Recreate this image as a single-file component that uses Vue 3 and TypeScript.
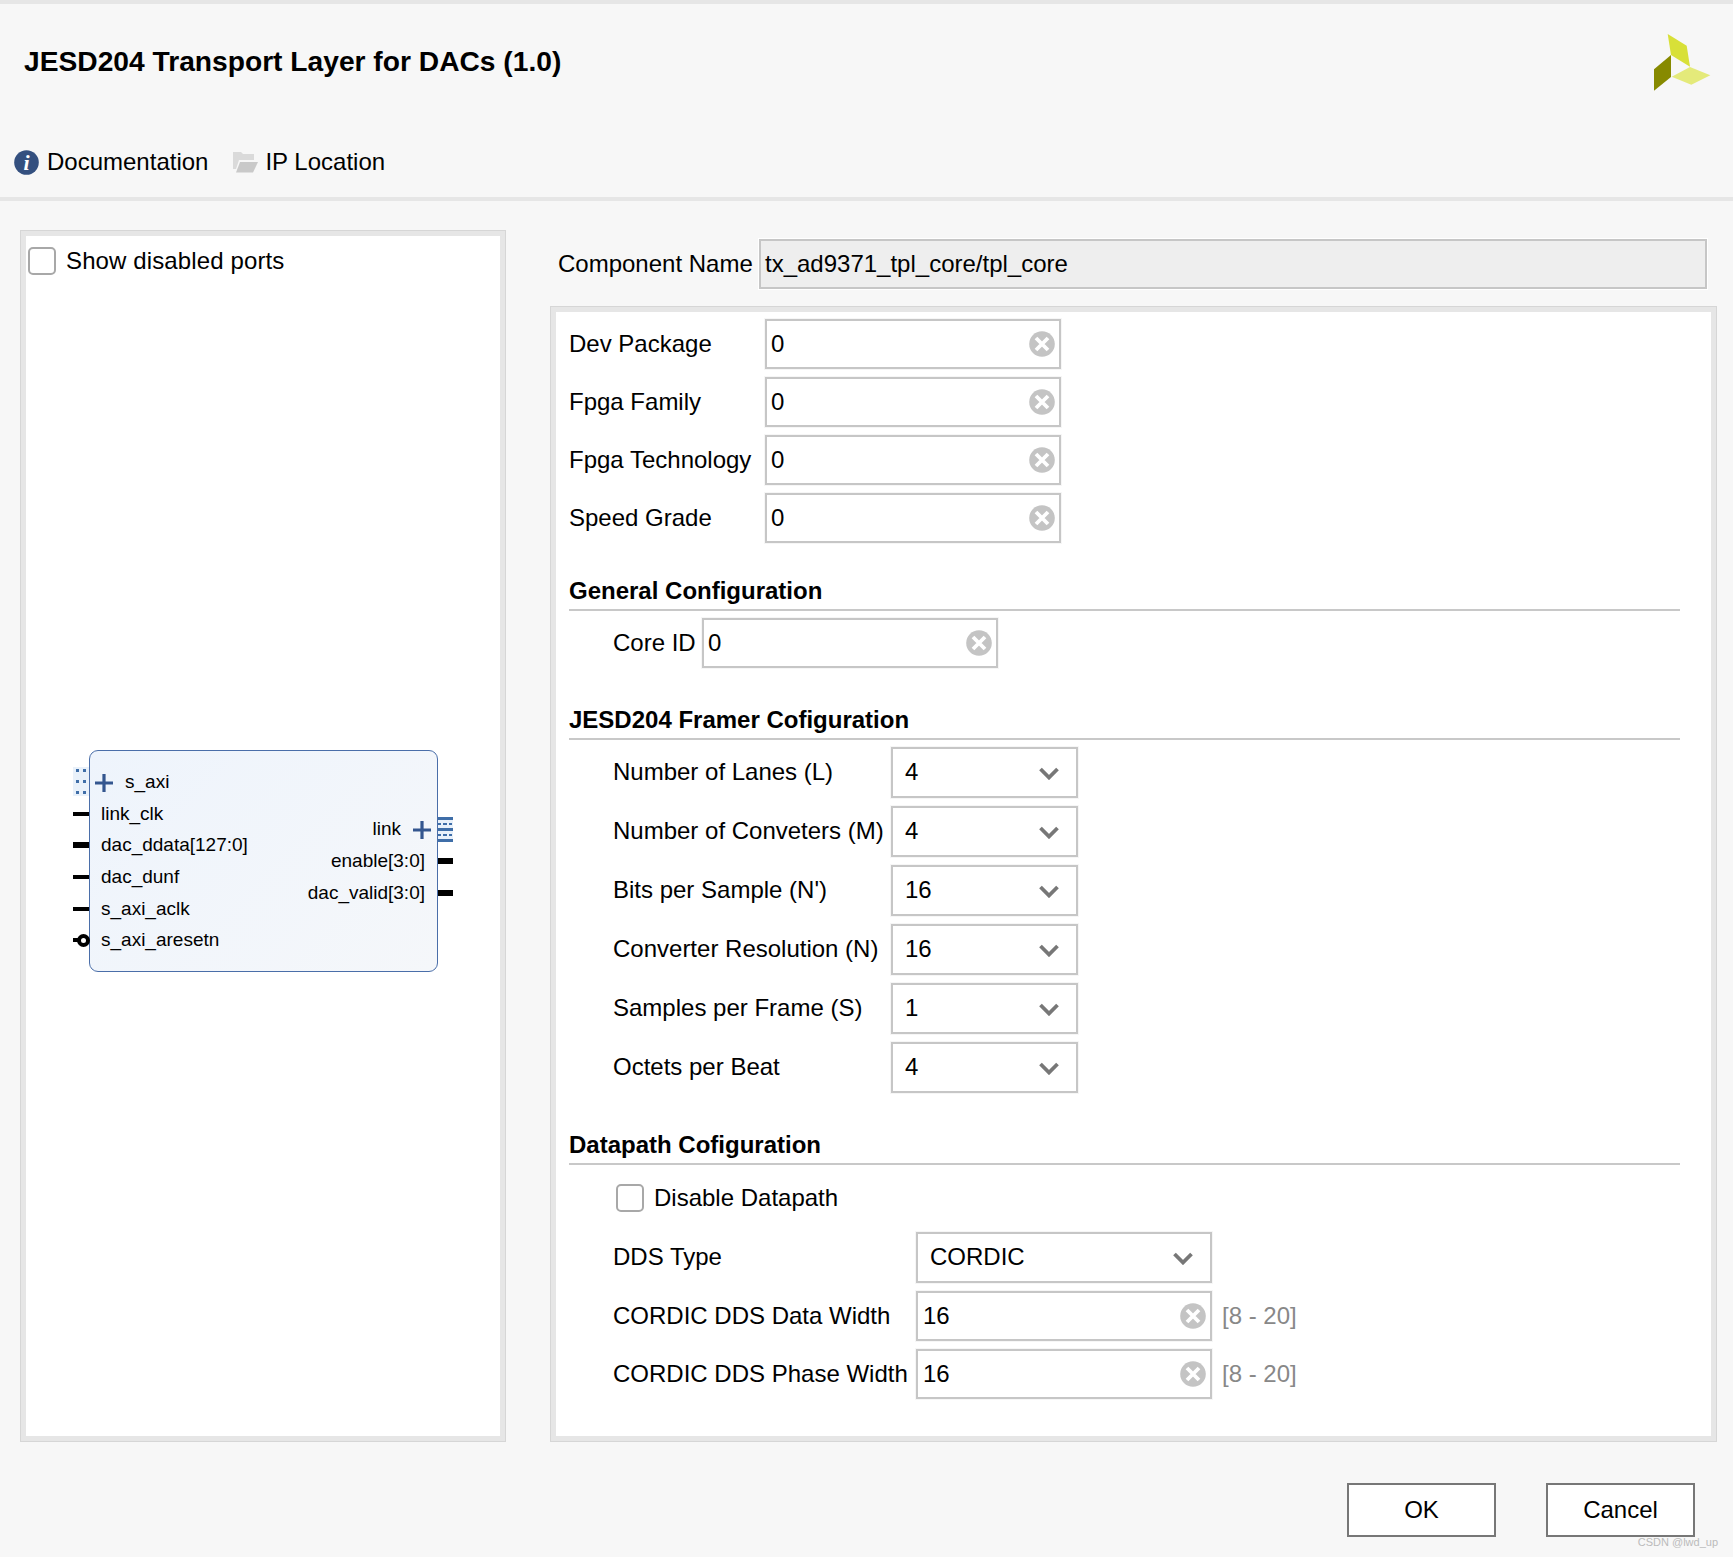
<script setup lang="ts">
interface Field { label: string; value: string; kind: 'input' | 'select'; range?: string }

const deviceFields: Field[] = [
  { label: 'Dev Package', value: '0', kind: 'input' },
  { label: 'Fpga Family', value: '0', kind: 'input' },
  { label: 'Fpga Technology', value: '0', kind: 'input' },
  { label: 'Speed Grade', value: '0', kind: 'input' },
]
const framerFields: Field[] = [
  { label: 'Number of Lanes (L)', value: '4', kind: 'select' },
  { label: 'Number of Conveters (M)', value: '4', kind: 'select' },
  { label: "Bits per Sample (N')", value: '16', kind: 'select' },
  { label: 'Converter Resolution (N)', value: '16', kind: 'select' },
  { label: 'Samples per Frame (S)', value: '1', kind: 'select' },
  { label: 'Octets per Beat', value: '4', kind: 'select' },
]
const dataFields: Field[] = [
  { label: 'DDS Type', value: 'CORDIC', kind: 'select' },
  { label: 'CORDIC DDS Data Width', value: '16', kind: 'input', range: '[8 - 20]' },
  { label: 'CORDIC DDS Phase Width', value: '16', kind: 'input', range: '[8 - 20]' },
]
const sections = [
  { title: '', rowClass: 'device', indent: false, fields: deviceFields },
  { title: 'General Configuration', rowClass: 'general', indent: true, fields: [{ label: 'Core ID', value: '0', kind: 'input' } as Field] },
  { title: 'JESD204 Framer Cofiguration', rowClass: 'framer', indent: true, fields: framerFields },
  { title: 'Datapath Cofiguration', rowClass: 'datapath', indent: true, fields: dataFields },
]
const leftPorts = [
  { name: 'link_clk', bus: false, neg: false },
  { name: 'dac_ddata[127:0]', bus: true, neg: false },
  { name: 'dac_dunf', bus: false, neg: false },
  { name: 's_axi_aclk', bus: false, neg: false },
  { name: 's_axi_aresetn', bus: false, neg: true },
]
const rightPorts = ['enable[3:0]', 'dac_valid[3:0]']
const dotRows = [2, 13, 24]
</script>

<template>
  <div class="dialog">
    <header class="head">
      <div class="title-row">
        <h1 class="title">JESD204 Transport Layer for DACs (1.0)</h1>
        <svg class="logo" width="60" height="60" viewBox="0 0 60 60">
          <polygon points="17.7,0 36.7,11.7 40,32.7 21,21" fill="#d8e038" />
          <polygon points="21,21 21,43 4,56.7 4,35.3" fill="#878a00" />
          <polygon points="21.7,42.7 40,33 60.3,41.3 41.3,50.7" fill="#e4ea7a" />
        </svg>
      </div>
      <nav class="links">
        <span class="link">
          <svg width="25" height="25" viewBox="0 0 25 25">
            <circle cx="12.5" cy="12.5" r="12.3" fill="#34507f" />
            <text x="12.5" y="20" class="info-i" text-anchor="middle">i</text>
          </svg>
          Documentation
        </span>
        <span class="link folder">
          <svg width="25" height="23" viewBox="0 0 25 23">
            <path d="M0 1 H8 L10 3 H21 V9 H6 L3 18 H0 Z" fill="#dadada" />
            <path d="M7 11 H25 L20 21.5 H3 Z" fill="#c9c9c9" />
          </svg>
          IP Location
        </span>
      </nav>
    </header>

    <main class="body">
      <section class="pane symbol-pane">
        <label class="check show-ports">
          <span class="box"></span>
          Show disabled ports
        </label>
        <div class="canvas">
          <div class="block">
            <div class="ports-left">
              <div class="port axi">
                <svg class="bus-left" width="16" height="29" viewBox="0 0 16 29">
                  <rect width="16" height="29" fill="#e9f1fa" />
                  <template v-for="y in dotRows" :key="y">
                    <rect x="3" :y="y" width="3" height="3" fill="#3f6ea8" />
                    <rect x="10" :y="y" width="3" height="3" fill="#3f6ea8" />
                  </template>
                </svg>
                <svg class="plus" width="18" height="18" viewBox="0 0 18 18"><path d="M9 0 V18 M0 9 H18" stroke="#34568f" stroke-width="3.2" /></svg>
                s_axi
              </div>
              <div v-for="p in leftPorts" :key="p.name" class="port">
                <span class="stub" :class="{ bus: p.bus }"></span>
                <span v-if="p.neg" class="bubble"></span>
                {{ p.name }}
              </div>
            </div>
            <div class="ports-right">
              <div class="port right link-port">
                link
                <svg class="plus" width="18" height="18" viewBox="0 0 18 18"><path d="M9 0 V18 M0 9 H18" stroke="#34568f" stroke-width="3.2" /></svg>
                <svg class="bus-right" width="15" height="25" viewBox="0 0 15 25">
                  <rect width="15" height="25" fill="#e9f1fa" />
                  <path d="M0 1.5 H15 M0 12.5 H15 M0 23.5 H15" stroke="#3f6ea8" stroke-width="3" />
                  <path d="M0 7 H15 M0 18 H15" stroke="#3f6ea8" stroke-width="2" stroke-dasharray="3 2 4 2" />
                </svg>
              </div>
              <div v-for="p in rightPorts" :key="p" class="port right">
                {{ p }}
                <span class="stub-right"></span>
              </div>
            </div>
          </div>
        </div>
      </section>

      <div class="config">
        <div class="name-row">
          <span class="name-label">Component Name</span>
          <div class="name-input">tx_ad9371_tpl_core/tpl_core</div>
        </div>
        <section class="pane form-pane">
          <div v-for="s in sections" :key="s.rowClass" class="group" :class="s.rowClass">
            <h2 v-if="s.title" class="group-title">{{ s.title }}</h2>
            <label v-if="s.rowClass === 'datapath'" class="check disable">
              <span class="box"></span>
              Disable Datapath
            </label>
            <div class="rows" :class="{ indent: s.indent }">
              <div v-for="f in s.fields" :key="f.label" class="row" :class="'row-' + f.kind">
                <span class="row-label">{{ f.label }}</span>
                <div class="control" :class="f.kind">
                  <span class="value">{{ f.value }}</span>
                  <svg v-if="f.kind === 'input'" width="26" height="26" viewBox="0 0 26 26">
                    <circle cx="13" cy="13" r="12.8" fill="#c4c4c4" />
                    <path d="M7 7 L19 19 M19 7 L7 19" stroke="#fff" stroke-width="3.8" />
                  </svg>
                  <svg v-else class="chevron" width="20" height="13" viewBox="0 0 20 13">
                    <path d="M1.5 2 L10 10.5 L18.5 2" fill="none" stroke="#777" stroke-width="3.8" />
                  </svg>
                </div>
                <span v-if="f.range" class="range">{{ f.range }}</span>
              </div>
            </div>
          </div>
        </section>
      </div>
    </main>

    <footer class="foot">
      <button class="btn" type="button">OK</button>
      <button class="btn" type="button">Cancel</button>
      <span class="mark">CSDN @lwd_up</span>
    </footer>
  </div>
</template>

<style>
html, body { margin: 0; background: #f7f7f7; }
</style>

<style scoped>
.dialog {
  position: relative;
  width: 1733px;
  height: 1557px;
  display: flex;
  flex-direction: column;
  box-sizing: border-box;
  background: #f7f7f7;
  color: #000;
  font-family: "Liberation Sans", Arial, sans-serif;
  font-size: 24px;
  overflow: hidden;
}
.head {
  box-sizing: border-box;
  height: 201px;
  border-top: 4px solid #e6e6e6;
  border-bottom: 4px solid #e6e6e6;
}
.title-row {
  display: flex;
  justify-content: space-between;
  align-items: flex-start;
  height: 114px;
}
.title {
  margin: 38px 0 0 24px;
  font-size: 28.2px;
  line-height: 38px;
  font-weight: 700;
}
.logo { margin: 30px 23px 0 0; overflow: visible; }
.links {
  display: flex;
  gap: 25px;
  height: 48px;
  margin-top: 20px;
  padding-left: 14px;
}
.link { display: flex; align-items: center; gap: 8px; }
.folder { gap: 7px; }
.info-i {
  font-family: "Liberation Serif", serif;
  font-style: italic;
  font-weight: 700;
  font-size: 22px;
  fill: #fff;
}
.body {
  flex: none;
  height: 1241px;
  display: flex;
  gap: 44px;
  padding: 29px 16px 0 20px;
  box-sizing: border-box;
}
.pane {
  box-sizing: border-box;
  border: 1px solid #d6d6d6;
  box-shadow: inset 0 0 0 5px #e6e6e6;
  background: #fff;
}
.symbol-pane {
  width: 486px;
  height: 1212px;
  padding: 5px;
  display: flex;
  flex-direction: column;
}
.check { display: flex; align-items: center; gap: 10px; }
.box {
  box-sizing: border-box;
  width: 28px;
  height: 28px;
  border: 2px solid #a8a8a8;
  border-radius: 5px;
  background: #fff;
}
.show-ports {
  height: 50px;
  padding-left: 2px;
  box-sizing: border-box;
  letter-spacing: 0.12px;
}
.canvas { flex: 1; display: flex; align-items: center; }
.block {
  box-sizing: border-box;
  position: relative;
  width: 349px;
  height: 222px;
  margin-left: 63px;
  border: 1px solid #4a6ea9;
  border-radius: 9px;
  background: linear-gradient(135deg, #eef4fc, #f5f7fa);
  display: flex;
  justify-content: space-between;
  font-size: 19px;
}
.ports-left { padding: 15px 0 0 11px; }
.ports-right { padding: 62px 12px 0 0; }
.port {
  position: relative;
  height: 31.7px;
  line-height: 31.7px;
  white-space: nowrap;
}
.port.axi { padding-left: 24px; }
.port.axi .plus { position: absolute; left: -6px; top: 8px; }
.bus-left { position: absolute; left: -28px; top: 1px; }
.bus-right { position: absolute; right: -28px; top: 4px; }
.link-port { padding-right: 24px; }
.link-port .plus { position: absolute; right: -6px; top: 8px; }
.right { text-align: right; height: 32px; line-height: 32px; }
.stub {
  position: absolute;
  left: -28px;
  top: 14px;
  width: 16px;
  height: 4px;
  background: #000;
}
.stub.bus { top: 13px; height: 6px; }
.bubble {
  position: absolute;
  left: -24px;
  top: 9.5px;
  width: 13px;
  height: 13px;
  box-sizing: border-box;
  border: 4px solid #000;
  border-radius: 50%;
  background: #fff;
}
.stub-right {
  position: absolute;
  right: -28px;
  top: 13px;
  width: 15px;
  height: 6px;
  background: #000;
}
.config { flex: 1; display: flex; flex-direction: column; min-width: 0; }
.name-row {
  display: flex;
  align-items: center;
  height: 50px;
  margin: 9px 10px 17px 0;
  padding-left: 8px;
}
.name-label { width: 201px; }
.name-input {
  flex: 1;
  box-sizing: border-box;
  height: 50px;
  line-height: 46px;
  padding-left: 4px;
  background: #eee;
  border: 2px solid #c6c6c6;
  box-shadow: 0 0 0 1px #fff;
}
.form-pane {
  height: 1136px;
  padding: 12px 36px 0 18px;
}
.rows { display: flex; flex-direction: column; gap: 8px; }
.indent { padding-left: 44px; }
.group-title {
  box-sizing: border-box;
  height: 36px;
  margin: 32px 0 7px;
  font-size: 24px;
  line-height: 32px;
  font-weight: 700;
  border-bottom: 2px solid #c8c8c8;
}
.framer .group-title { margin: 36px 0 7px; }
.datapath .group-title { margin: 36px 0 8px; }
.row { display: flex; align-items: center; }
.row-label { white-space: nowrap; }
.row-select .row-label,
.select .value { margin-bottom: 2px; }
.device .row-label { width: 196px; }
.general .row-label { width: 89px; }
.framer .row-label { width: 278px; }
.datapath .row-label { width: 303px; }
.control {
  box-sizing: border-box;
  display: flex;
  align-items: center;
  justify-content: space-between;
  background: #fff;
  border: 2px solid #c6c6c6;
  box-shadow: 0 0 0 1px #f6f6f6;
}
.input { width: 295px; height: 50px; padding: 0 4px; }
.select { width: 187px; height: 51px; padding: 0 17px 0 12px; }
.chevron { margin-top: 1px; }
.device .control { width: 296px; }
.general .control { width: 296px; }
.datapath .control { width: 296px; }
.datapath .select { padding-left: 12px; }
.datapath .input { padding-left: 5px; }
.range { margin-left: 10px; color: #888; }
.disable {
  height: 49px;
  margin-bottom: 10px;
  padding-left: 47px;
}
.foot {
  flex: 1;
  display: flex;
  justify-content: flex-end;
  gap: 50px;
  padding: 41px 38px 0 0;
  box-sizing: border-box;
}
.btn {
  box-sizing: border-box;
  width: 149px;
  height: 54px;
  background: #fff;
  border: 2px solid #777;
  color: #000;
  font: inherit;
  padding: 0;
}
.mark {
  position: absolute;
  right: 15px;
  bottom: 8px;
  font-size: 11px;
  line-height: 14px;
  color: #bbb;
}
</style>
